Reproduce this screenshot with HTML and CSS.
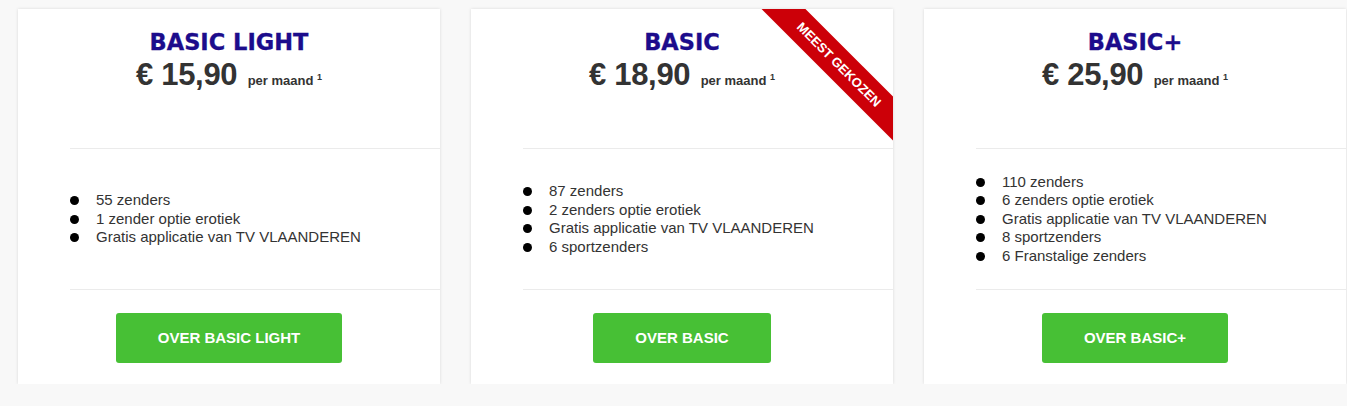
FILE: index.html
```html
<!DOCTYPE html>
<html lang="nl">
<head>
  <meta charset="UTF-8">
  <title>TV pakketten</title>
  <link rel="stylesheet" href="styles.css">
</head>
<body>

  <div class="plans">

    <div class="plan">
      <div class="plan-head">
        <h2>BASIC LIGHT</h2>
        <p class="price">€ 15,90 <span class="per">per maand <sup>1</sup></span></p>
      </div>
      <div class="plan-body">
        <ul>
          <li>55 zenders</li>
          <li>1 zender optie erotiek</li>
          <li>Gratis applicatie van TV VLAANDEREN</li>
        </ul>
      </div>
      <div class="plan-foot">
        <a href="#" class="btn">OVER BASIC LIGHT</a>
      </div>
    </div>

    <div class="plan">
      <div class="ribbon">MEEST GEKOZEN</div>
      <div class="plan-head">
        <h2>BASIC</h2>
        <p class="price">€ 18,90 <span class="per">per maand <sup>1</sup></span></p>
      </div>
      <div class="plan-body">
        <ul>
          <li>87 zenders</li>
          <li>2 zenders optie erotiek</li>
          <li>Gratis applicatie van TV VLAANDEREN</li>
          <li>6 sportzenders</li>
        </ul>
      </div>
      <div class="plan-foot">
        <a href="#" class="btn">OVER BASIC</a>
      </div>
    </div>

    <div class="plan">
      <div class="plan-head">
        <h2>BASIC+</h2>
        <p class="price">€ 25,90 <span class="per">per maand <sup>1</sup></span></p>
      </div>
      <div class="plan-body">
        <ul>
          <li>110 zenders</li>
          <li>6 zenders optie erotiek</li>
          <li>Gratis applicatie van TV VLAANDEREN</li>
          <li>8 sportzenders</li>
          <li>6 Franstalige zenders</li>
        </ul>
      </div>
      <div class="plan-foot">
        <a href="#" class="btn">OVER BASIC+</a>
      </div>
    </div>

  </div>

</body>
</html>
```

FILE: styles.css
```css
body {
  margin: 0;
  background: #f8f8f8;
  font-family: "Liberation Sans", Arial, sans-serif;
  color: #333;
}

.plans {
  display: flex;
  gap: 31px;
  padding: 9px 0 0 18px;
}

.plan {
  position: relative;
  overflow: hidden;
  flex: 0 0 422px;
  background: white;
  box-shadow: 0 0 3px rgba(0,0,0,0.13);
}

.plan-head {
  height: 139px;
  box-sizing: border-box;
  padding-top: 20px;
  text-align: center;
}

.plan-head h2 {
  margin: 0;
  font-family: "DejaVu Sans", sans-serif;
  font-weight: bold;
  font-size: 22.5px;
  line-height: 26px;
  color: #1c0c8c;
  -webkit-text-stroke: 0.3px #1c0c8c;
}

.price {
  margin: 3px 0 0;
  font-size: 31px;
  line-height: 34px;
  font-weight: bold;
  letter-spacing: -0.3px;
}

.per {
  font-size: 13px;
  letter-spacing: 0;
  margin-left: 2px;
}

.per sup {
  font-size: 9px;
  vertical-align: 5px;
}

.plan-body {
  height: 140px;
  margin-left: 52px;
  border-top: 1px solid #ebebeb;
  border-bottom: 1px solid #ebebeb;
  display: flex;
  align-items: center;
}

.plan-body ul {
  margin: 0;
  padding: 0;
  list-style: none;
  font-size: 15px;
  line-height: 18.5px;
}

.plan-body li {
  position: relative;
  padding-left: 26px;
}

.plan-body li::before {
  content: "";
  position: absolute;
  left: 0;
  top: 5px;
  width: 9px;
  height: 9px;
  border-radius: 50%;
  background: #000;
}

.plan-foot {
  padding: 23px 0 21px;
  text-align: center;
}

.btn {
  display: inline-block;
  padding: 0 42px;
  height: 50px;
  line-height: 50px;
  background: #47c035;
  color: white;
  border-radius: 3px;
  font-size: 15px;
  font-weight: bold;
  text-decoration: none;
}

.ribbon {
  position: absolute;
  left: 248px;
  top: 40px;
  width: 240px;
  height: 31px;
  line-height: 31px;
  background: #cc0008;
  color: white;
  text-align: center;
  font-size: 13px;
  font-weight: bold;
  transform: rotate(45deg);
}
```
